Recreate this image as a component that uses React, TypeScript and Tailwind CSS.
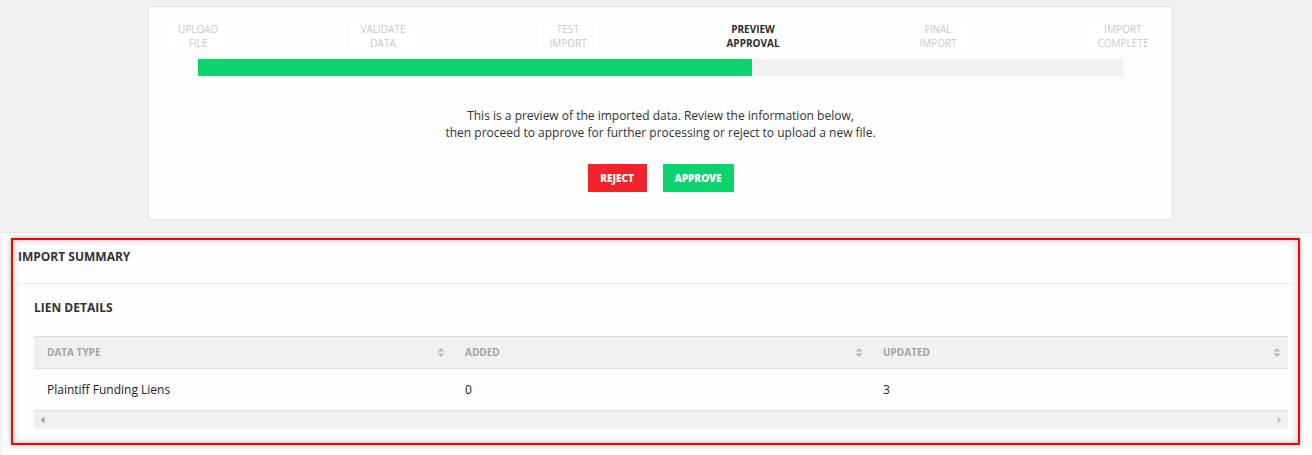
import React from "react";

type Step = { top: string; bottom: string; active?: boolean };

const steps: Step[] = [
  { top: "UPLOAD", bottom: "FILE" },
  { top: "VALIDATE", bottom: "DATA" },
  { top: "TEST", bottom: "IMPORT" },
  { top: "PREVIEW", bottom: "APPROVAL", active: true },
  { top: "FINAL", bottom: "IMPORT" },
  { top: "IMPORT", bottom: "COMPLETE" },
];

const columns = ["DATA TYPE", "ADDED", "UPDATED"];
const rows = [["Plaintiff Funding Liens", "0", "3"]];

function SortIcon() {
  return (
    <svg width="8" height="11" viewBox="0 0 8 11" aria-hidden className="shrink-0">
      <path d="M4 1L7.5 4.5H0.5Z" fill="#b5b5b5" />
      <path d="M4 10L7.5 6.5H0.5Z" fill="#b5b5b5" />
    </svg>
  );
}

function Stepper() {
  return (
    <div className="pt-[13px]">
      <div className="mx-[49px] flex justify-between">
        {steps.map((s) => (
          <div key={s.top + s.bottom} className="flex w-0 justify-center">
            <div
              className={
                "whitespace-nowrap bg-white px-[11px] py-[2px] text-center text-[10px] leading-[14px] " +
                (s.active ? "font-bold text-[#2b2b2b]" : "text-[#c8c8c8]")
              }
            >
              <div>{s.top}</div>
              <div>{s.bottom}</div>
            </div>
          </div>
        ))}
      </div>
      <div className="mx-[49px] mt-[7px] h-[17px] bg-[#f0f0f0]">
        <div className="h-full bg-[#0cd46c]" style={{ width: `${(556 / 928) * 100}%` }} />
      </div>
    </div>
  );
}

export default function App() {
  return (
    <div
      className="min-h-[455px] overflow-hidden bg-[#f1f1f1] pt-[6px]"
      style={{ fontFamily: '"Open Sans", "Noto Sans", sans-serif' }}
    >
      <div className="ml-[148px] h-[214px] w-[1025px] border border-[#e4e4e4] bg-[#fdfdfd]">
        <Stepper />
        <p className="mt-[31px] text-center text-[12px] leading-[17px] text-[#333]">
          This is a preview of the imported data. Review the information below,
          <br />
          then proceed to approve for further processing or reject to upload a new file.
        </p>
        <div className="mt-[23px] flex justify-center gap-4">
          <button className="h-[28px] w-[59px] bg-[#f2232a] text-[10px] font-extrabold text-white">
            REJECT
          </button>
          <button className="h-[28px] w-[71px] bg-[#0cd46c] text-[10px] font-extrabold text-white">
            APPROVE
          </button>
        </div>
      </div>

      <div className="ml-[2px] mt-[12px] border-t border-[#e6e6e6] bg-[#fdfdfd] pb-[12px] pl-[9px] pr-[12px] pt-[5px]">
        <div className="border-2 border-[#ff0000] bg-[#fdfdfd] shadow-[0_0_5px_rgba(0,0,0,0.3),inset_0_0_7px_rgba(0,0,0,0.22)]">
          <div className="h-[44px] border-b border-[#ebebeb] pl-[5px] pt-[8px]">
            <h2 className="text-[12px] font-bold leading-[17px] text-[#333]">IMPORT SUMMARY</h2>
          </div>
          <div className="pb-[14px] pl-[21px] pr-[10px] pt-[15px]">
            <h3 className="text-[12px] font-bold leading-[17px] text-[#333]">LIEN DETAILS</h3>
            <div className="mt-[20px]">
              <div className="grid h-[32px] grid-cols-3 border-t border-[#dcdcdc] bg-[#f0f0f0]">
                {columns.map((c) => (
                  <div key={c} className="flex items-center justify-between pl-[13px] pr-[7px]">
                    <span className="text-[10px] font-bold text-[#a3a3a3]">{c}</span>
                    <SortIcon />
                  </div>
                ))}
              </div>
              {rows.map((r) => (
                <div
                  key={r[0]}
                  className="grid h-[43px] grid-cols-3 border-t border-b border-[#e0e0e0] bg-[#fdfdfd]"
                >
                  {r.map((v, i) => (
                    <div key={i} className="flex items-center pl-[13px] text-[12px] text-[#222]">
                      {v}
                    </div>
                  ))}
                </div>
              ))}
              <div className="flex h-[18px] items-center justify-between bg-[#f0f0f0] px-[6px]">
                <svg width="5" height="8" viewBox="0 0 5 8" aria-hidden>
                  <path d="M0.5 4L4.5 0.5V7.5Z" fill="#a0a0a0" />
                </svg>
                <svg width="5" height="8" viewBox="0 0 5 8" aria-hidden>
                  <path d="M4.5 4L0.5 0.5V7.5Z" fill="#c4c4c4" />
                </svg>
              </div>
            </div>
          </div>
        </div>
      </div>
    </div>
  );
}
